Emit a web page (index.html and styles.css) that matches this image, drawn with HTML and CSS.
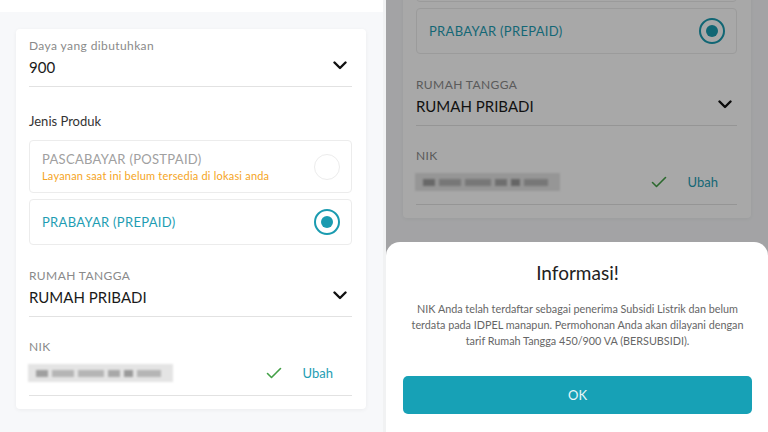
FILE: index.html
```html
<!DOCTYPE html>
<html lang="id">
<head>
<meta charset="utf-8">
<link rel="stylesheet" href="styles.css">
</head>
<body>
<div class="pane left">
  <div class="topbar"></div>
  <div class="card">
    <div class="field">
      <div class="label">Daya yang dibutuhkan</div>
      <div class="value-row"><span class="value">900</span>
        <svg class="chev" width="14" height="9" viewBox="0 0 14 9"><path d="M1.5 1.5 L7 7 L12.5 1.5" fill="none" stroke="#111" stroke-width="2.4" stroke-linecap="round" stroke-linejoin="round"/></svg>
      </div>
    </div>
    <div class="section-title">Jenis Produk</div>
    <div class="option disabled">
      <div class="opt-text">
        <div class="opt-title">PASCABAYAR (POSTPAID)</div>
        <div class="opt-sub">Layanan saat ini belum tersedia di lokasi anda</div>
      </div>
      <span class="radio"></span>
    </div>
    <div class="option selected">
      <div class="opt-text"><div class="opt-title">PRABAYAR (PREPAID)</div></div>
      <span class="radio on"><span class="dot"></span></span>
    </div>
    <div class="field f2">
      <div class="label">RUMAH TANGGA</div>
      <div class="value-row"><span class="value">RUMAH PRIBADI</span>
        <svg class="chev" width="14" height="9" viewBox="0 0 14 9"><path d="M1.5 1.5 L7 7 L12.5 1.5" fill="none" stroke="#111" stroke-width="2.4" stroke-linecap="round" stroke-linejoin="round"/></svg>
      </div>
    </div>
    <div class="field f3">
      <div class="label">NIK</div>
      <div class="nik-row">
        <div class="blur"><span class="b b1"></span><span class="b b2"></span><span class="b b3"></span><span class="b b4"></span><span class="b b5"></span><span class="b b6"></span></div>
        <svg class="check" width="16" height="12" viewBox="0 0 16 12"><path d="M1.5 6.5 L5.5 10.5 L14.5 1.5" fill="none" stroke="#43a047" stroke-width="1.6" stroke-linecap="round" stroke-linejoin="round"/></svg>
        <span class="ubah">Ubah</span>
      </div>
    </div>
  </div>
</div>
<div class="sep"></div>
<div class="pane right">
  <div class="scrolled">
    <div class="topbar"></div>
    <div class="card">
      <div class="field">
        <div class="label">Daya yang dibutuhkan</div>
        <div class="value-row"><span class="value">900</span>
          <svg class="chev" width="14" height="9" viewBox="0 0 14 9"><path d="M1.5 1.5 L7 7 L12.5 1.5" fill="none" stroke="#111" stroke-width="2.4" stroke-linecap="round" stroke-linejoin="round"/></svg>
        </div>
      </div>
      <div class="section-title">Jenis Produk</div>
      <div class="option disabled">
        <div class="opt-text">
          <div class="opt-title">PASCABAYAR (POSTPAID)</div>
          <div class="opt-sub">Layanan saat ini belum tersedia di lokasi anda</div>
        </div>
        <span class="radio"></span>
      </div>
      <div class="option selected">
        <div class="opt-text"><div class="opt-title">PRABAYAR (PREPAID)</div></div>
        <span class="radio on"><span class="dot"></span></span>
      </div>
      <div class="field f2">
        <div class="label">RUMAH TANGGA</div>
        <div class="value-row"><span class="value">RUMAH PRIBADI</span>
          <svg class="chev" width="14" height="9" viewBox="0 0 14 9"><path d="M1.5 1.5 L7 7 L12.5 1.5" fill="none" stroke="#111" stroke-width="2.4" stroke-linecap="round" stroke-linejoin="round"/></svg>
        </div>
      </div>
      <div class="field f3">
        <div class="label">NIK</div>
        <div class="nik-row">
          <div class="blur"><span class="b b1"></span><span class="b b2"></span><span class="b b3"></span><span class="b b4"></span><span class="b b5"></span><span class="b b6"></span></div>
          <svg class="check" width="16" height="12" viewBox="0 0 16 12"><path d="M1.5 6.5 L5.5 10.5 L14.5 1.5" fill="none" stroke="#43a047" stroke-width="1.6" stroke-linecap="round" stroke-linejoin="round"/></svg>
          <span class="ubah">Ubah</span>
        </div>
      </div>
    </div>
  </div>
  <div class="overlay"></div>
  <div class="sheet">
    <div class="sheet-title">Informasi!</div>
    <p class="sheet-body">NIK Anda telah terdaftar sebagai penerima Subsidi Listrik dan belum terdata pada IDPEL manapun. Permohonan Anda akan dilayani dengan tarif Rumah Tangga 450/900 VA (BERSUBSIDI).</p>
    <div class="btn">OK</div>
  </div>
</div>
</body>
</html>
```
FILE: styles.css
```css
* { box-sizing: border-box; }
html, body { margin: 0; padding: 0; }
body {
  width: 768px;
  height: 432px;
  overflow: hidden;
  display: flex;
  font-family: Lato, "Noto Sans", sans-serif;
  color: #1c1c1c;
  background: #fff;
}
.pane {
  height: 432px;
  background: #f7f8fa;
  overflow: hidden;
}
.left { width: 383px; }
.sep { width: 3px; background: #f1f2f3; }
.right { flex: 1; position: relative; }
.scrolled { margin-top: -191px; margin-left: 1px; }
.topbar { height: 12px; background: #fff; }
.card {
  margin: 17px 17px 0 16px;
  background: #fff;
  border-radius: 4px;
  box-shadow: 0 1px 4px rgba(0, 0, 0, 0.05);
  padding: 9px 14px 13px 13px;
}
.field {
  border-bottom: 1px solid #e2e2e2;
  padding-bottom: 9px;
}
.label {
  font-size: 12px;
  line-height: 16px;
  color: #8a8a8a;
  letter-spacing: 0.4px;
}
.value-row {
  margin-top: 3px;
  display: flex;
  align-items: center;
  justify-content: space-between;
  padding-right: 5px;
}
.value {
  font-size: 15px;
  line-height: 20px;
  color: #1a1a1a;
}
.chev { display: block; margin-top: -3px; }
.section-title {
  margin-top: 25px;
  font-size: 13px;
  line-height: 18px;
  color: #333;
}
.option {
  margin-top: 10px;
  border: 1px solid #ececec;
  border-radius: 4px;
  display: flex;
  align-items: center;
  justify-content: space-between;
  padding: 0 11px 0 12px;
  height: 53px;
}
.option.selected { margin-top: 6px; height: 46px; }
.opt-title {
  font-size: 13px;
  line-height: 17px;
  letter-spacing: 0.3px;
}
.disabled .opt-title { color: #a0a0a0; }
.selected .opt-title { color: #1e9db3; }
.opt-sub {
  font-size: 11px;
  line-height: 15px;
  color: #f5a524;
  letter-spacing: 0.2px;
}
.radio {
  width: 26px;
  height: 26px;
  border-radius: 50%;
  border: 1px solid #ececec;
  display: flex;
  align-items: center;
  justify-content: center;
}
.radio.on { border: 2px solid #1a9bb0; }
.dot {
  width: 12px;
  height: 12px;
  border-radius: 50%;
  background: #1a9bb0;
}
.f2 { margin-top: 23px; padding-bottom: 9px; }
.f3 { margin-top: 22px; padding-bottom: 8px; }
.nik-row {
  margin-top: 4px;
  display: flex;
  align-items: center;
  height: 28px;
}
.blur {
  width: 145px;
  height: 18px;
  margin-left: -1px;
  background: #e4e4e4;
  display: flex;
  align-items: center;
  gap: 4px;
  padding: 0 8px;
  filter: blur(1.2px);
}
.b { height: 7px; background: #b5b5b5; display: block; }
.b1 { width: 12px; background: #9f9f9f; }
.b2 { width: 22px; }
.b3 { width: 26px; }
.b4 { width: 12px; background: #a8a8a8; }
.b5 { width: 9px; background: #9a9a9a; }
.b6 { width: 24px; }
.check { margin-left: auto; margin-right: 21px; }
.ubah {
  font-size: 13px;
  color: #1e9db3;
  margin-right: 19px;
}
.overlay {
  position: absolute;
  inset: 0;
  background: rgba(0, 0, 0, 0.34);
}
.sheet {
  position: absolute;
  left: 0;
  right: 0;
  bottom: 0;
  height: 190px;
  background: #fff;
  border-radius: 14px 14px 0 0;
  padding: 19px 16px 0 17px;
  text-align: center;
}
.sheet-title {
  font-size: 19px;
  line-height: 24px;
  color: #222;
}
.sheet-body {
  margin: 16px 2px 0 2px;
  font-size: 10.8px;
  line-height: 16px;
  color: #666;
}
.btn {
  margin-top: 27px;
  height: 38px;
  border-radius: 5px;
  background: #17a1b6;
  color: #e9f7f9;
  font-size: 13px;
  line-height: 38px;
}
```
